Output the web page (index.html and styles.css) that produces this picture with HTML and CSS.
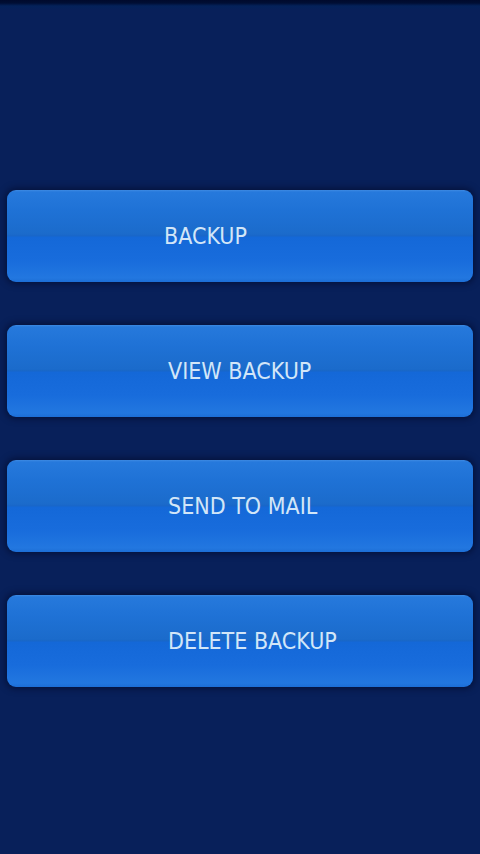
FILE: index.html
```html
<!DOCTYPE html>
<html>
<head>
<meta charset="utf-8">
<link rel="stylesheet" href="styles.css">
</head>
<body>
<div class="screen">
  <div class="topshade"></div>
  <div class="menu">
    <div class="btn btn-first"><span class="label">BACKUP</span></div>
    <div class="btn"><span class="label">VIEW BACKUP</span></div>
    <div class="btn"><span class="label">SEND TO MAIL</span></div>
    <div class="btn"><span class="label">DELETE BACKUP</span></div>
  </div>
</div>
</body>
</html>
```
FILE: styles.css
```css
html, body {
  margin: 0;
  padding: 0;
  background: #08205a;
}
.screen {
  width: 480px;
  height: 854px;
  position: relative;
  background: #08205a;
  overflow: hidden;
}
.topshade {
  position: absolute;
  left: 0;
  top: 0;
  width: 100%;
  height: 10px;
  background: linear-gradient(to bottom, #000a2c 0px, #000e34 3px, #04225a 6px, #08205a 10px);
}
.menu {
  display: flex;
  flex-direction: column;
  gap: 43px;
  padding: 190px 7px 0 7px;
}
.btn {
  height: 92px;
  border-radius: 9px;
  display: flex;
  align-items: center;
  padding-left: 161px;
  box-sizing: border-box;
  background: linear-gradient(to bottom,
    #3d8ae2 0px, #2679dc 2px, #1f72d6 20px, #1b6bcb 44px, #1866c8 46px,
    #1468d8 47px, #186cdc 70px, #2277e0 88px, #1c6ed6 92px);
  box-shadow: 0 0 6px 2px rgba(0, 8, 36, 0.55);
}
.btn-first {
  padding-left: 157px;
}
.label {
  font-family: "DejaVu Sans Condensed", "DejaVu Sans", sans-serif;
  font-stretch: condensed;
  font-size: 23px;
  letter-spacing: 0;
  color: #d2e6f8;
  line-height: 1;
  margin-top: 1px;
}
```
